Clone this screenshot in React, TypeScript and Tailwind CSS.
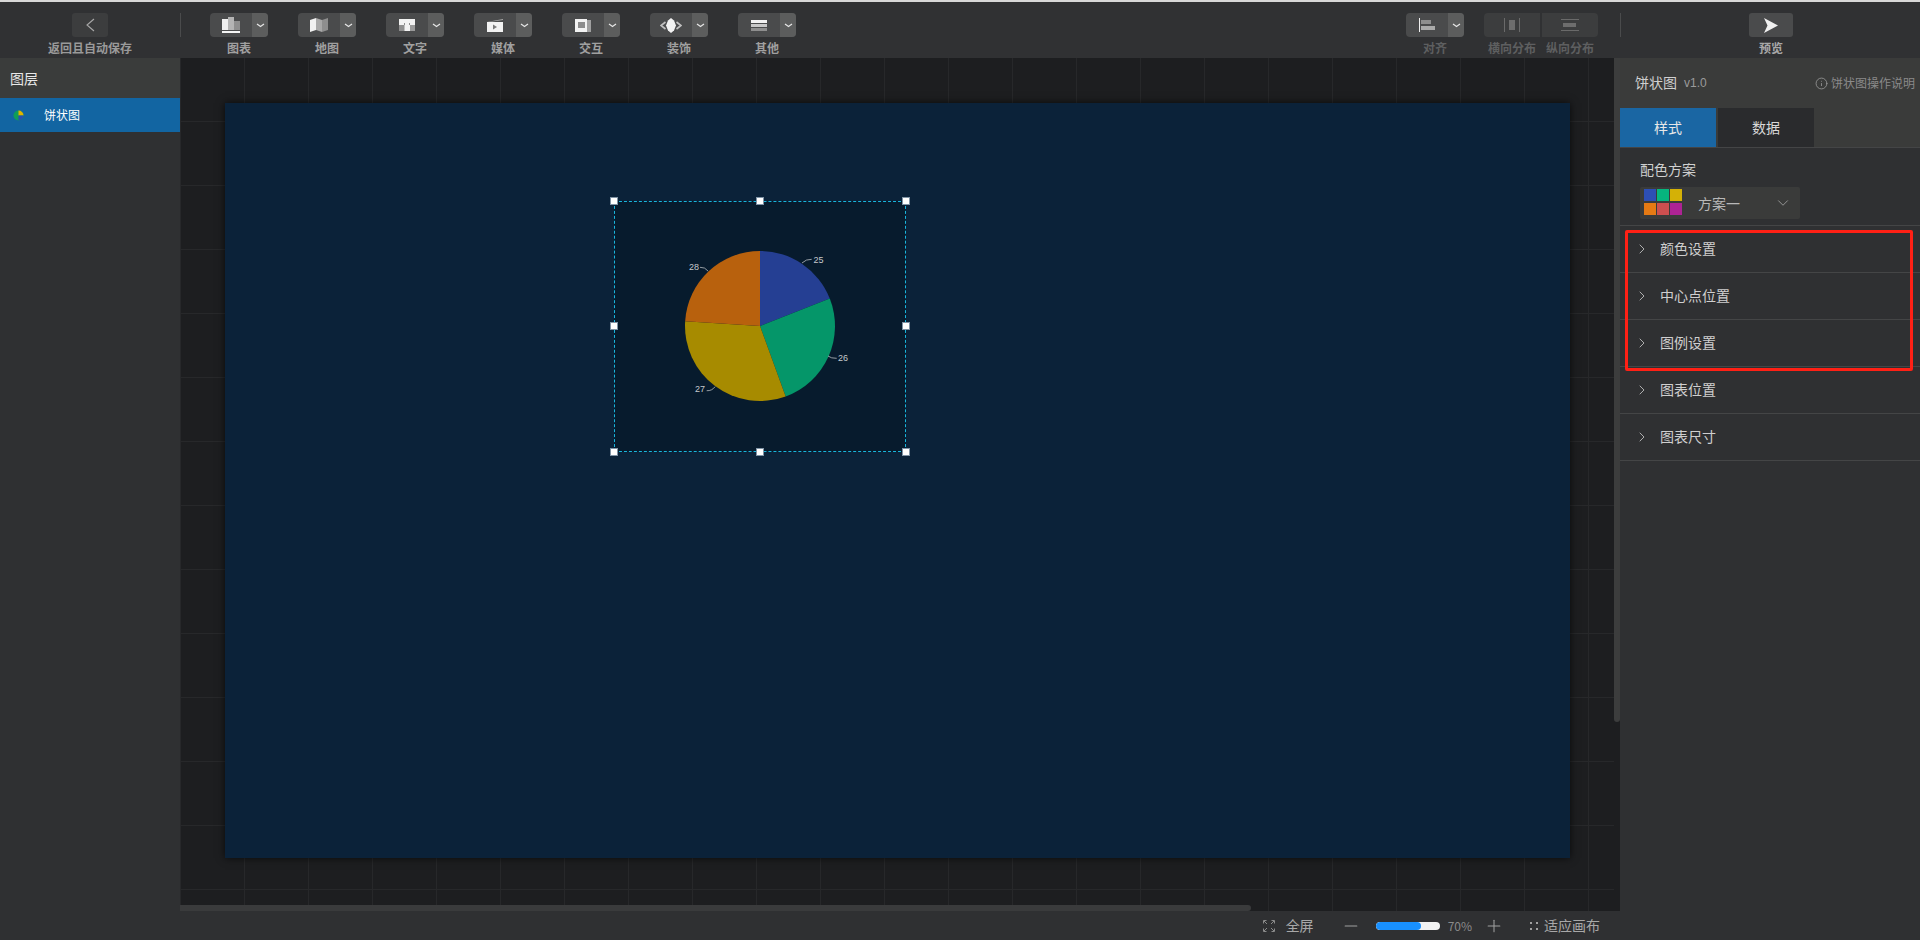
import React from "react";
import { ChevronRight, ChevronDown, Info, Minus, Plus } from "lucide-react";

const font = "font-['Noto_Sans_CJK_SC','Noto_Sans',sans-serif]";

// small toolbar glyphs
const ChartIcon = () => (
  <svg width="18" height="16" viewBox="0 0 18 16">
    <rect x="0" y="2" width="6" height="11" fill="#efefef" />
    <rect x="6" y="0" width="6" height="13" fill="#b4b4b4" />
    <rect x="12" y="4" width="6" height="9" fill="#8e8e8e" />
    <rect x="0" y="14" width="18" height="2" fill="#f4f4f4" />
  </svg>
);
const MapIcon = () => (
  <svg width="18" height="14" viewBox="0 0 18 14">
    <path d="M0 2 L6 0 V12 L0 14 Z" fill="#f0f0f0" />
    <path d="M6 0 L12 2 V14 L6 12 Z" fill="#a8a8a8" />
    <path d="M12 2 L18 0 V12 L12 14 Z" fill="#8e8e8e" />
  </svg>
);
const TextIcon = () => (
  <svg width="16" height="12" viewBox="0 0 16 12">
    <rect width="16" height="12" fill="#f2f2f2" />
    <rect x="0" y="6" width="5.5" height="6" fill="#8e8e8e" />
    <rect x="11" y="6" width="5" height="6" fill="#9a9a9a" />
    <rect x="5" y="4" width="1" height="2" fill="#8e8e8e" />
    <rect x="10" y="4" width="1" height="2" fill="#8e8e8e" />
  </svg>
);
const MediaIcon = () => (
  <svg width="16" height="13" viewBox="0 0 16 13">
    <path d="M0 3 L16 0 V1 L2 3 Z" fill="#a8a8a8" />
    <rect y="3" width="16" height="10" fill="#f2f2f2" />
    <path d="M6 5.5 L10 8 L6 10.5 Z" fill="#7a7a7a" />
  </svg>
);
const InteractIcon = () => (
  <svg width="16" height="13" viewBox="0 0 16 13">
    <rect x="11" y="1" width="5" height="12" fill="#a0a0a0" />
    <rect width="12" height="13" fill="#f2f2f2" />
    <rect x="3" y="3" width="7" height="6" fill="#8c8c8c" />
  </svg>
);
const DecorIcon = () => (
  <svg width="22" height="15" viewBox="0 0 22 15">
    <path d="M11 0 L14 2.5 L16 7.5 L14 12.5 L11 15 L8 12.5 L6 7.5 L8 2.5 Z" fill="#f2f2f2" />
    <path d="M5.5 4 L1 7.5 L5.5 11" fill="none" stroke="#c0c0c0" strokeWidth="1.6" />
    <path d="M16.5 4 L21 7.5 L16.5 11" fill="none" stroke="#c0c0c0" strokeWidth="1.6" />
  </svg>
);
const OtherIcon = () => (
  <svg width="16" height="11" viewBox="0 0 16 11">
    <rect width="16" height="3" fill="#f2f2f2" />
    <rect width="16" height="3" y="4" fill="#c8c8c8" />
    <rect width="16" height="3" y="8" fill="#8e8e8e" />
  </svg>
);
const AlignIcon = () => (
  <svg width="16" height="14" viewBox="0 0 16 14">
    <rect width="1" height="14" fill="#efefef" />
    <rect x="2" y="2" width="10" height="4" fill="#8e8e8e" />
    <rect x="2" y="8" width="14" height="4" fill="#aaaaaa" />
  </svg>
);
const HDistIcon = () => (
  <svg width="16" height="14" viewBox="0 0 16 14">
    <rect width="1" height="14" fill="#6a6a6a" />
    <rect x="5" y="2" width="6" height="10" fill="#6d6d6d" />
    <rect x="15" width="1" height="14" fill="#6a6a6a" />
  </svg>
);
const VDistIcon = () => (
  <svg width="18" height="12" viewBox="0 0 18 12">
    <rect width="18" height="1" fill="#6a6a6a" />
    <rect x="2" y="4" width="13" height="4" fill="#6d6d6d" />
    <rect y="11" width="18" height="1" fill="#6a6a6a" />
  </svg>
);

const ToolGroup = ({ label, icon, dim }: { label: string; icon: React.ReactNode; dim?: boolean }) => (
  <div className="flex w-[58px] flex-col items-center">
    <div className="flex h-6 w-full overflow-hidden rounded-[4px] bg-[#4a4b4c]">
      <div className="flex flex-1 items-center justify-center">{icon}</div>
      <div className="flex w-4 items-center justify-center bg-[#5c5d5d]">
        <svg width="9" height="5" viewBox="0 0 9 5" fill="none" stroke="#e4e4e4" strokeWidth="1.3">
          <path d="M1 1 L4.5 3.5 L8 1" />
        </svg>
      </div>
    </div>
    <span className={`mt-[2px] whitespace-nowrap text-[12px] leading-[18px] font-bold ${dim ? "text-[#5e5f60]" : "text-[#a0a0a0]"}`}>
      {label}
    </span>
  </div>
);

const Toolbar = () => (
  <div className="flex h-[56px] shrink-0 items-start bg-[#303133] pt-[11px]">
    <div className="flex w-[180px] shrink-0 flex-col items-center">
      <div className="flex h-6 w-9 items-center justify-center rounded-[3px] bg-[#3c3d3e]">
        <svg width="10" height="14" viewBox="0 0 10 14" fill="none" stroke="#a8a8a8" strokeWidth="1.1">
          <path d="M9 1 L2 7 L9 13" />
        </svg>
      </div>
      <span className="mt-[2px] text-[12px] leading-[18px] font-bold text-[#9a9a9a]">返回且自动保存</span>
    </div>
    <div className="h-6 w-px bg-[#4a4b4c]" />
    <div className="ml-[29px] flex gap-[30px]">
      <ToolGroup label="图表" icon={<ChartIcon />} />
      <ToolGroup label="地图" icon={<MapIcon />} />
      <ToolGroup label="文字" icon={<TextIcon />} />
      <ToolGroup label="媒体" icon={<MediaIcon />} />
      <ToolGroup label="交互" icon={<InteractIcon />} />
      <ToolGroup label="装饰" icon={<DecorIcon />} />
      <ToolGroup label="其他" icon={<OtherIcon />} />
    </div>
    <div className="ml-auto flex">
      <ToolGroup label="对齐" icon={<AlignIcon />} dim />
      <div className="ml-5 flex w-[56px] flex-col items-center">
        <div className="flex h-6 w-full items-center justify-center rounded-l-[4px] bg-[#3c3d3e]">
          <HDistIcon />
        </div>
        <span className="mt-[2px] whitespace-nowrap text-[12px] leading-[18px] font-bold text-[#5e5f60]">横向分布</span>
      </div>
      <div className="ml-[2px] flex w-[56px] flex-col items-center">
        <div className="flex h-6 w-full items-center justify-center rounded-r-[4px] bg-[#3c3d3e]">
          <VDistIcon />
        </div>
        <span className="mt-[2px] whitespace-nowrap text-[12px] leading-[18px] font-bold text-[#5e5f60]">纵向分布</span>
      </div>
    </div>
    <div className="ml-[22px] h-6 w-px bg-[#4a4b4c]" />
    <div className="flex w-[299px] flex-col items-center pl-[1px]">
      <div className="flex h-6 w-11 items-center justify-center rounded-[3px] bg-[#4a4b4c]">
        <svg width="14" height="15" viewBox="0 0 14 15">
          <path d="M0 0 L14 7.5 L0 15 L3.5 7.5 Z" fill="#f0f0f0" />
        </svg>
      </div>
      <span className="mt-[2px] text-[12px] leading-[18px] font-bold text-[#a8a8a8]">预览</span>
    </div>
  </div>
);

const LayerPanel = () => (
  <div className="flex w-[180px] shrink-0 flex-col bg-[#2f3032]">
    <div className="flex h-10 items-center bg-[#3a3c3b] pl-[10px] text-[14px] text-[#e8e8e8]">图层</div>
    <div className="flex h-[34px] items-center bg-[#1265a2] pl-[13px] text-[12px] text-white">
      <svg width="11" height="11" viewBox="0 0 11 11">
        <circle cx="5.5" cy="5.5" r="5" fill="#0f9d58" />
        <path d="M5.5 .5 A5 5 0 0 1 10.5 5.5 H5.5 Z" fill="#e0b400" />
        <path d="M10.5 5.5 A5 5 0 0 1 5.5 10.5 V5.5 Z" fill="#2a4fb0" />
      </svg>
      <span className="ml-[20px]">饼状图</span>
    </div>
  </div>
);

// wedge path around the pie centre, angles in degrees clockwise from twelve o'clock
const wedge = (from: number, to: number) => {
  const pt = (a: number) => {
    const r = (a * Math.PI) / 180;
    return `${100 + 75 * Math.sin(r)} ${100 - 75 * Math.cos(r)}`;
  };
  return `M100 100 L${pt(from)} A75 75 0 ${to - from > 180 ? 1 : 0} 1 ${pt(to)} Z`;
};

const PieWidget = () => (
  <div className="absolute top-[98px] left-[389px] h-[251px] w-[292px] border border-dashed border-[#19b5dc] bg-[#071b2d]">
    <svg width="200" height="200" viewBox="0 0 200 200" className="absolute top-[24px] left-[45px]">
      <path d={wedge(0, 68.5)} fill="#253f93" />
      <path d={wedge(68.5, 160)} fill="#059669" />
      <path d={wedge(160, 273.6)} fill="#a78b00" />
      <path d={wedge(273.6, 360)} fill="#b8610d" />
      <g fill="none" stroke="#b8bcc0" strokeWidth="0.8">
        <path d="M142 37 Q146 33 151.7 33.3" />
        <path d="M168 130 Q171 132.5 176.7 132.3" />
        <path d="M55 160.7 Q52 165 46.7 164.7" />
        <path d="M48 45 Q45 41 40 41.3" />
      </g>
      <g fill="#c5c9cc" fontSize="9" fontFamily="'Liberation Sans', sans-serif">
        <text x="153.5" y="36.5">25</text>
        <text x="178" y="135">26</text>
        <text x="35" y="166">27</text>
        <text x="29" y="44">28</text>
      </g>
    </svg>
    {[
      "-top-[5px] -left-[5px]",
      "-top-[5px] left-[141px]",
      "-top-[5px] -right-[5px]",
      "top-[120px] -left-[5px]",
      "top-[120px] -right-[5px]",
      "-bottom-[5px] -left-[5px]",
      "-bottom-[5px] left-[141px]",
      "-bottom-[5px] -right-[5px]",
    ].map((pos) => (
      <span key={pos} className={`absolute h-2 w-2 border border-[#7f93a5] bg-white ${pos}`} />
    ))}
  </div>
);

const Workspace = () => (
  <div className="relative flex-1 overflow-hidden bg-[#1d1e20] bg-[linear-gradient(#27282a_1px,transparent_1px),linear-gradient(90deg,#27282a_1px,transparent_1px)] bg-[size:64px_64px] bg-[position:64px_63px]">
    <div className="ml-[45px] mt-[45px] h-[755px] w-[1345px] bg-[#0b2239] shadow-[0_0_8px_rgba(0,0,0,0.7)]">
      <div className="relative h-full w-full">
        <PieWidget />
      </div>
    </div>
    <div className="absolute bottom-0 left-0 h-[6px] w-[1071px] rounded-r-[3px] bg-[#3a3b3c]" />
  </div>
);

const sections = ["颜色设置", "中心点位置", "图例设置", "图表位置", "图表尺寸"];

const SidePanel = () => (
  <div className="relative flex w-[306px] shrink-0">
    <div className="w-[6px] bg-[#1d1e20]">
      <div className="h-[664px] rounded-b-[3px] bg-[#3c3d3d]" />
    </div>
    <div className="flex flex-1 flex-col bg-[#2f3032]">
      <div className="flex h-[50px] items-center bg-[#3a3b3a] pl-[15px] pr-[5px]">
        <span className="pb-[2px] text-[14px] text-[#d0d0d0]">饼状图</span>
        <span className="ml-[7px] font-['Liberation_Sans'] text-[12px] text-[#9a9a9a]">v1.0</span>
        <Info size={13} strokeWidth={1.5} className="ml-auto text-[#9a9a9a]" />
        <span className="ml-[3px] text-[12px] text-[#8a8a8a]">饼状图操作说明</span>
      </div>
      <div className="flex h-10 gap-[2px] border-b border-[#444546] bg-[#3a3b3a]">
        <div className="flex w-[96px] items-center justify-center bg-[#1a66a3] text-[14px] text-[#e8e8e8]">样式</div>
        <div className="flex w-[96px] items-center justify-center bg-[#2a2b2d] text-[14px] text-[#d8d8d8]">数据</div>
      </div>
      <div className="h-[78px] border-b border-[#444546] pl-[20px]">
        <div className="pt-[11px] text-[14px] leading-[20px] text-[#d0d0d0]">配色方案</div>
        <div className="mt-[8px] flex h-8 w-[160px] items-center rounded-[2px] bg-[#3a3b3a] pl-1">
          <div className="mb-[2px] grid grid-cols-[12px_12px_12px] gap-x-px gap-y-[2px]">
            <span className="h-3 bg-[#2d4fb5]" />
            <span className="h-3 bg-[#06b57e]" />
            <span className="h-3 bg-[#d4b106]" />
            <span className="h-3 bg-[#e57a14]" />
            <span className="h-3 bg-[#cc4f4f]" />
            <span className="h-3 bg-[#ad2394]" />
          </div>
          <span className="ml-[16px] text-[14px] text-[#b8b8b8]">方案一</span>
          <ChevronDown size={18} strokeWidth={1} className="ml-auto mr-[8px] text-[#b0b0b0]" />
        </div>
      </div>
      {sections.map((s) => (
        <div key={s} className="flex h-[47px] items-center border-b border-[#444546] pl-[14px]">
          <ChevronRight size={16} strokeWidth={1.25} className="text-[#c8c8c8]" />
          <span className="ml-[10px] pb-[2px] text-[14px] text-[#cfcfcf]">{s}</span>
        </div>
      ))}
    </div>
    <div className="absolute top-[172px] left-[11px] h-[141px] w-[288px] rounded-[2px] border-[3px] border-[#ff2015]" />
  </div>
);

const BottomBar = () => (
  <div className="flex h-[29px] shrink-0 items-center bg-[#2f3032] pr-[320px] text-[#a0a0a0]">
    <div className="ml-auto flex items-center">
      <svg width="12" height="12" viewBox="0 0 12 12" stroke="#8a8a8a" fill="none">
        <path d="M.5 3.5V.5h3M8.5 .5h3v3M11.5 8.5v3h-3M3.5 11.5h-3v-3M1 1l3 3M11 1L8 4M11 11L8 8M1 11l3-3" />
      </svg>
      <span className="ml-[11px] text-[14px] text-[#a8a8a8]">全屏</span>
      <Minus size={20} strokeWidth={1.25} className="ml-[27px]" />
      <div className="ml-[15px] h-2 w-16 overflow-hidden rounded-full bg-[#f2f2f2]">
        <div className="h-full w-[45px] rounded-full bg-[#1890ff]" />
      </div>
      <span className="ml-2 text-[12px] text-[#8a8a8a]">70%</span>
      <Plus size={20} strokeWidth={1.25} className="ml-3" />
      <svg width="10" height="10" viewBox="0 0 10 10" fill="#a0a0a0" className="ml-[25px]">
        <path d="M1 1h2v2H1zM7 1h2v2H7zM7 7h2v2H7zM1 7h2v2H1z" />
      </svg>
      <span className="ml-[5px] text-[14px] text-[#a8a8a8]">适应画布</span>
    </div>
  </div>
);

export default function App() {
  return (
    <div className={`flex h-[940px] w-[1920px] flex-col overflow-hidden bg-[#2f3032] ${font}`}>
      <div className="h-[2px] shrink-0 bg-[#d8d8d8]" />
      <Toolbar />
      <div className="flex min-h-0 flex-1">
        <LayerPanel />
        <Workspace />
        <SidePanel />
      </div>
      <BottomBar />
    </div>
  );
}
